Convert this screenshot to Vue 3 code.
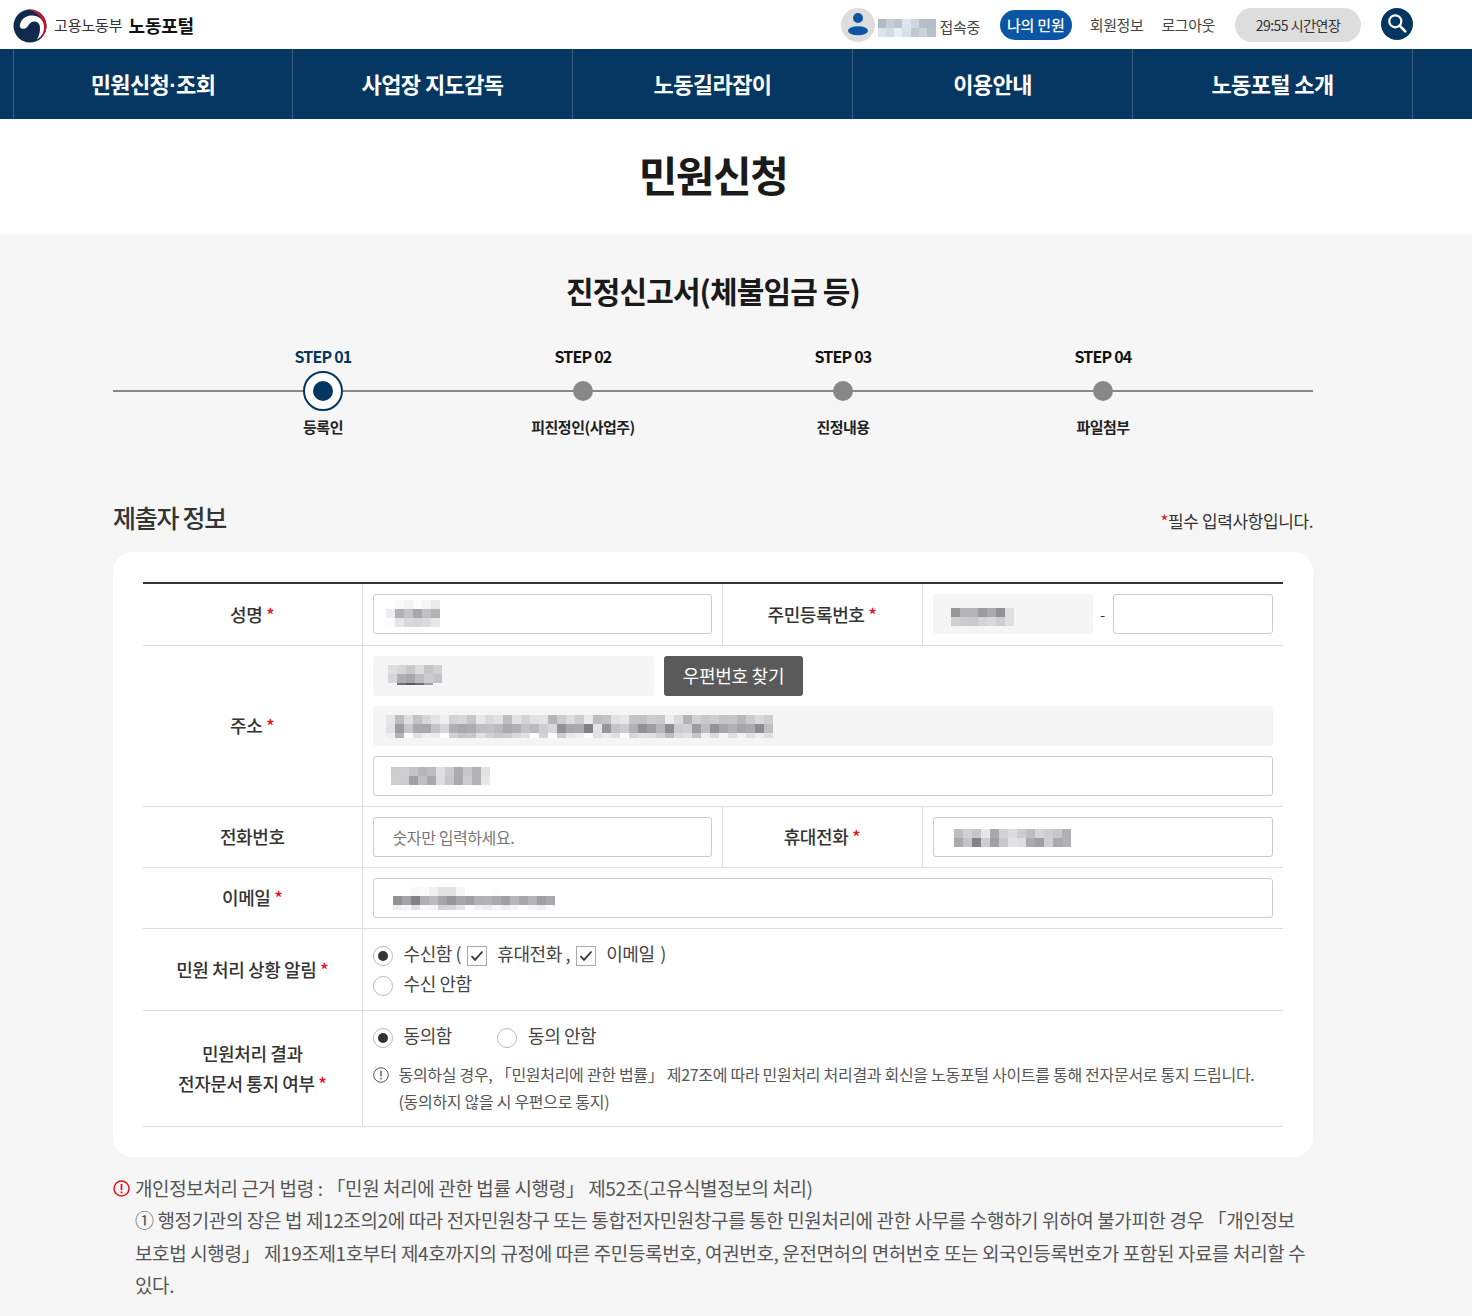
<script setup>
const navItems = [
  { text: '민원신청', rest: '조회' },
  { text: '사업장 지도감독' },
  { text: '노동길라잡이' },
  { text: '이용안내' },
  { text: '노동포털 소개' },
];

const steps = [
  { no: 'STEP 01', label: '등록인', active: true },
  { no: 'STEP 02', label: '피진정인(사업주)' },
  { no: 'STEP 03', label: '진정내용' },
  { no: 'STEP 04', label: '파일첨부' },
];

// blurred personal data, grey levels row by row
const blur = {
  user: [
    [185, 205, 195, 228, 215, 190, 190],
    [226, 218, 238, 225, 200, 210, 192],
  ],
  name: [
    [255, 250, 244, 252, 246, 234],
    [238, 176, 196, 168, 194, 178],
    [252, 230, 216, 214, 220, 232],
  ],
  zip: [
    [222, 214, 200, 220, 198, 208],
    [214, 176, 168, 190, 205, 196],
    [245, 110, 90, 110, 160, 245],
  ],
  addr: [
    [230, 190, 222, 196, 214, 228, 240, 210, 214, 198, 232, 218, 226, 190, 226, 212, 226, 228, 182, 204, 220, 206, 234, 190, 196, 226, 232, 196, 194, 204, 202, 238, 218, 180, 210, 200, 206, 196, 198, 184, 204, 218, 206],
    [226, 158, 200, 170, 168, 196, 214, 176, 168, 172, 190, 194, 186, 170, 178, 196, 186, 206, 216, 146, 168, 170, 128, 228, 150, 196, 206, 178, 146, 158, 184, 142, 204, 208, 158, 190, 148, 166, 178, 166, 170, 140, 190],
    [238, 180, 255, 226, 238, 236, 255, 210, 196, 200, 226, 210, 200, 204, 216, 226, 255, 210, 255, 206, 232, 238, 255, 226, 236, 224, 255, 216, 226, 224, 210, 190, 220, 226, 196, 240, 218, 245, 224, 240, 224, 238, 222],
  ],
  detail: [
    [204, 206, 196, 182, 188, 224, 204, 172, 200, 178, 226],
    [206, 204, 160, 192, 168, 222, 200, 170, 204, 178, 230],
  ],
  rrn: [
    [150, 180, 180, 156, 170, 146, 222],
    [208, 204, 202, 212, 218, 206, 224],
  ],
  phone: [
    [190, 210, 198, 230, 170, 210, 220, 205, 190, 214, 206, 200, 178],
    [170, 196, 130, 206, 160, 200, 226, 222, 170, 160, 208, 170, 178],
  ],
  email: [
    [255, 255, 248, 250, 240, 226, 226, 246, 255, 255, 255, 252, 255, 255, 255, 255, 255, 255],
    [146, 164, 130, 176, 186, 166, 152, 168, 160, 178, 180, 170, 160, 182, 168, 180, 160, 168],
    [238, 246, 226, 250, 246, 210, 214, 228, 255, 242, 236, 246, 238, 246, 255, 244, 240, 250],
  ],
};

const cellColor = (v) => `rgb(${v},${v},${v + 3})`;
const userColor = (v) => `rgb(${v - 8},${v},${v + 10})`;
</script>

<template>
  <div class="page">
    <header class="top">
      <div class="top-in">
        <a class="logo">
          <svg width="34" height="34" viewBox="0 0 34 34">
            <circle cx="17" cy="17" r="16.500" fill="#0f2a4c" />
            <path d="M6.800 17.500C7 11 12 7 18 6.500 24 5.800 31.500 10 31.500 18c0 5-2.500 9.500-7.500 12.500 2.500-4 3.500-9.500 2.800-13.500C26 12.800 21 11.500 18 13.500c-2.500 1.700-3.200 5-6 6-2.500.8-4.700 0-5.200-2z" fill="#fff" />
            <path d="M15 .7C24-.3 33.500 6.500 33.500 17c0 6-3.500 11.500-8 14 4-4 6-9 5.500-14C30 8.500 23.500 2.500 15 .7z" fill="#c8142e" />
          </svg>
          <span class="logo-sub">고용노동부</span>
          <span class="logo-main">노동포털</span>
        </a>
        <div class="util">
          <span class="avatar">
            <svg width="24" height="26" viewBox="0 0 24 26">
              <circle cx="12" cy="6" r="5" fill="#0a56a5" />
              <ellipse cx="12" cy="18.700" rx="10" ry="4.500" fill="#0a56a5" />
            </svg>
          </span>
          <span class="mosaic user-blur">
            <span v-for="(row, i) in blur.user" :key="i" class="mrow">
              <i v-for="(v, j) in row" :key="j" class="cell" :style="{ background: userColor(v) }"></i>
            </span>
          </span>
          <span class="conn">접속중</span>
          <a class="my-pill">나의 민원</a>
          <a class="ulink first">회원정보</a>
          <a class="ulink">로그아웃</a>
          <a class="timer">29:55 시간연장</a>
          <a class="search">
            <svg width="22" height="22" viewBox="0 0 22 22" fill="none" stroke="#fff" stroke-width="2.200" stroke-linecap="round">
              <circle cx="9.300" cy="8.300" r="6" />
              <path d="M14 13l5.300 5.300" stroke-width="2.600" />
            </svg>
          </a>
        </div>
      </div>
    </header>

    <nav class="gnb">
      <ul class="gnb-list">
        <li v-for="item in navItems" :key="item.text">
          {{ item.text }}<span v-if="item.rest" class="mid">·</span>{{ item.rest }}
        </li>
      </ul>
    </nav>

    <div class="title-wrap">
      <h1>민원신청</h1>
    </div>

    <main class="body">
      <div class="content">
        <h2 class="form-title">진정신고서(체불임금 등)</h2>

        <div class="steps">
          <div class="steps-line"></div>
          <div v-for="s in steps" :key="s.no" class="step" :class="{ on: s.active }">
            <span class="step-no">{{ s.no }}</span>
            <span class="dot-box">
              <span class="dot"></span>
            </span>
            <span class="step-label">{{ s.label }}</span>
          </div>
        </div>

        <div class="sec-head">
          <h3>제출자 정보</h3>
          <p><em>*</em>필수 입력사항입니다.</p>
        </div>

        <section class="card">
          <table class="form">
            <colgroup>
              <col style="width: 219px" />
              <col style="width: 360px" />
              <col style="width: 200px" />
              <col />
            </colgroup>
            <tbody>
              <tr class="first-row">
                <th>성명 <em>*</em></th>
                <td>
                  <div class="field">
                    <span class="mosaic m-name">
                      <span v-for="(row, i) in blur.name" :key="i" class="mrow">
                        <i v-for="(v, j) in row" :key="j" class="cell" :style="{ background: cellColor(v) }"></i>
                      </span>
                    </span>
                  </div>
                </td>
                <th>주민등록번호 <em>*</em></th>
                <td>
                  <div class="rrn">
                    <div class="field ro rrn-a">
                      <span class="mosaic m-rrn">
                        <span v-for="(row, i) in blur.rrn" :key="i" class="mrow">
                          <i v-for="(v, j) in row" :key="j" class="cell" :style="{ background: cellColor(v) }"></i>
                        </span>
                      </span>
                    </div>
                    <span class="dash">-</span>
                    <div class="field rrn-b"></div>
                  </div>
                </td>
              </tr>
              <tr>
                <th>주소 <em>*</em></th>
                <td colspan="3">
                  <div class="addr">
                    <div class="zip-row">
                      <div class="field ro zip">
                        <span class="mosaic m-zip">
                          <span v-for="(row, i) in blur.zip" :key="i" class="mrow">
                            <i v-for="(v, j) in row" :key="j" class="cell" :style="{ background: cellColor(v) }"></i>
                          </span>
                        </span>
                      </div>
                      <button class="zip-btn">우편번호 찾기</button>
                    </div>
                    <div class="field ro">
                      <span class="mosaic m-addr">
                        <span v-for="(row, i) in blur.addr" :key="i" class="mrow">
                          <i v-for="(v, j) in row" :key="j" class="cell" :style="{ background: cellColor(v) }"></i>
                        </span>
                      </span>
                    </div>
                    <div class="field">
                      <span class="mosaic m-detail">
                        <span v-for="(row, i) in blur.detail" :key="i" class="mrow">
                          <i v-for="(v, j) in row" :key="j" class="cell" :style="{ background: cellColor(v) }"></i>
                        </span>
                      </span>
                    </div>
                  </div>
                </td>
              </tr>
              <tr>
                <th>전화번호</th>
                <td>
                  <div class="field ph">숫자만 입력하세요.</div>
                </td>
                <th>휴대전화 <em>*</em></th>
                <td>
                  <div class="field">
                    <span class="mosaic m-phone">
                      <span v-for="(row, i) in blur.phone" :key="i" class="mrow">
                        <i v-for="(v, j) in row" :key="j" class="cell" :style="{ background: cellColor(v) }"></i>
                      </span>
                    </span>
                  </div>
                </td>
              </tr>
              <tr>
                <th>이메일 <em>*</em></th>
                <td colspan="3">
                  <div class="field">
                    <span class="mosaic m-email">
                      <span v-for="(row, i) in blur.email" :key="i" class="mrow">
                        <i v-for="(v, j) in row" :key="j" class="cell" :style="{ background: cellColor(v) }"></i>
                      </span>
                    </span>
                  </div>
                </td>
              </tr>
              <tr>
                <th>민원 처리 상황 알림 <em>*</em></th>
                <td colspan="3" class="opts">
                  <div class="opt-line">
                    <span class="radio checked"></span>
                    <span class="opt-txt">수신함 (</span>
                    <span class="check">
                      <svg width="14" height="12" viewBox="0 0 14 12" fill="none" stroke="#333" stroke-width="1.800"><path d="M1.500 6l3.500 3.800L12.500 1.500" /></svg>
                    </span>
                    <span class="opt-txt gap-l">휴대전화 ,</span>
                    <span class="check">
                      <svg width="14" height="12" viewBox="0 0 14 12" fill="none" stroke="#333" stroke-width="1.800"><path d="M1.500 6l3.500 3.800L12.500 1.500" /></svg>
                    </span>
                    <span class="opt-txt gap-l">이메일 <span class="paren">)</span></span>
                  </div>
                  <div class="opt-line">
                    <span class="radio"></span>
                    <span class="opt-txt">수신 안함</span>
                  </div>
                </td>
              </tr>
              <tr class="last">
                <th>민원처리 결과<br />전자문서 통지 여부 <em>*</em></th>
                <td colspan="3" class="opts agree">
                  <div class="opt-line">
                    <span class="radio checked"></span>
                    <span class="opt-txt">동의함</span>
                    <span class="radio second"></span>
                    <span class="opt-txt">동의 안함</span>
                  </div>
                  <div class="info">
                    <span class="info-ico">
                      <svg width="16" height="16" viewBox="0 0 16 16" fill="none" stroke="#555">
                        <circle cx="8" cy="8" r="7.300" />
                        <path d="M8 3.800v5.400M8 10.800v1.600" stroke-width="1.400" />
                      </svg>
                    </span>
                    <p>동의하실 경우, 「민원처리에 관한 법률」 제27조에 따라 민원처리 처리결과 회신을 노동포털 사이트를 통해 전자문서로 통지 드립니다.<br />(동의하지 않을 시 우편으로 통지)</p>
                  </div>
                </td>
              </tr>
            </tbody>
          </table>
        </section>

        <div class="notice">
          <span class="notice-ico">
            <svg width="17" height="17" viewBox="0 0 17 17" fill="none" stroke="#e8141c">
              <circle cx="8.500" cy="8.500" r="7.500" stroke-width="1.500" />
              <path d="M8.500 4v6M8.500 11.500v1.800" stroke-width="1.800" />
            </svg>
          </span>
          <p>개인정보처리 근거 법령 : 「민원 처리에 관한 법률 시행령」 제52조(고유식별정보의 처리)<br />① 행정기관의 장은 법 제12조의2에 따라 전자민원창구 또는 통합전자민원창구를 통한 민원처리에 관한 사무를 수행하기 위하여 불가피한 경우 「개인정보 보호법 시행령」 제19조제1호부터 제4호까지의 규정에 따른 주민등록번호, 여권번호, 운전면허의 면허번호 또는 외국인등록번호가 포함된 자료를 처리할 수 있다.</p>
        </div>
      </div>
    </main>
  </div>
</template>

<style>
html,
body {
  margin: 0;
  background: #f6f6f6;
}
</style>

<style scoped>
.page {
  font-family: 'Noto Sans CJK KR', 'Noto Sans', sans-serif;
  color: #222;
  height: 1316px;
  overflow: hidden;
}
.top {
  background: #fff;
  height: 49px;
}
.top-in {
  width: 1400px;
  margin-left: 13px;
  height: 49px;
  display: flex;
  justify-content: space-between;
}
.logo {
  display: flex;
  align-items: center;
  height: 49px;
  margin-top: 1px;
}
.logo svg {
  display: block;
  margin-right: 7px;
}
.logo-sub {
  font-size: 15px;
  color: #333;
  letter-spacing: -0.1px;
  margin-bottom: 2px;
}
.logo-main {
  font-size: 18px;
  font-weight: 700;
  color: #111;
  margin: 0 0 2px 6px;
  letter-spacing: -0.2px;
}
.util {
  display: flex;
  align-items: flex-start;
}
.avatar {
  width: 34px;
  height: 34px;
  margin-top: 8px;
  border-radius: 50%;
  background: #ddd;
  display: flex;
  align-items: center;
  justify-content: center;
}
.mosaic {
  display: inline-flex;
  flex-direction: column;
  flex-shrink: 0;
}
.mrow {
  display: flex;
}
.cell {
  display: block;
  width: 9px;
  height: 9px;
}
.user-blur {
  margin: 19px 0 0 3px;
  width: 58px;
  overflow: hidden;
}
.user-blur .cell {
  width: 8.300px;
}
.conn {
  font-size: 15px;
  color: #444;
  margin: 16px 0 0 4px;
  line-height: 22px;
  letter-spacing: -0.4px;
}
.my-pill {
  margin: 10px 0 0 20px;
  width: 72px;
  height: 30px;
  border-radius: 15px;
  background: #0a56a5;
  color: #fff;
  font-size: 15px;
  font-weight: 500;
  line-height: 29px;
  text-align: center;
  letter-spacing: -0.2px;
}
.ulink {
  font-size: 15px;
  color: #444;
  margin: 14px 0 0 18px;
  line-height: 22px;
  letter-spacing: -0.4px;
}
.timer {
  margin: 8px 0 0 20px;
  width: 126px;
  height: 34px;
  border-radius: 17px;
  background: #ddd;
  color: #333;
  font-size: 14px;
  line-height: 34px;
  text-align: center;
  letter-spacing: -0.5px;
}
.search {
  margin: 8px 0 0 20px;
  width: 32px;
  height: 32px;
  border-radius: 50%;
  background: #04375f;
  display: flex;
  align-items: center;
  justify-content: center;
}
.gnb {
  background: #063762;
  height: 70px;
}
.gnb-list {
  list-style: none;
  margin: 0 0 0 13px;
  padding: 0;
  width: 1400px;
  height: 70px;
  display: flex;
  border-left: 1px solid #3c5f80;
  box-sizing: content-box;
}
.gnb-list li {
  width: 280px;
  border-right: 1px solid #3c5f80;
  box-sizing: border-box;
  text-align: center;
  color: #fff;
  font-size: 22px;
  font-weight: 700;
  line-height: 68px;
  letter-spacing: -0.6px;
}
.gnb-list li:first-child {
  width: 279px;
}
.mid {
  font-family: 'Liberation Sans', sans-serif;
}
.title-wrap {
  background: #fff;
  height: 115px;
  width: 100%;
}
.title-wrap h1 {
  margin: 0 0 0 13px;
  width: 1400px;
  text-align: center;
  font-size: 42px;
  font-weight: 700;
  line-height: 110px;
  letter-spacing: -1.500px;
  color: #1a1a1a;
}
.body {
  background: #f6f6f6;
}
.content {
  width: 1200px;
  margin-left: 113px;
}
.form-title {
  margin: 0;
  padding-top: 33px;
  text-align: center;
  font-size: 30px;
  font-weight: 700;
  line-height: 46px;
  letter-spacing: -0.9px;
  color: #1a1a1a;
}
.steps {
  position: relative;
  display: flex;
  padding-left: 80px;
  margin-top: 31px;
}
.steps-line {
  position: absolute;
  left: 0;
  right: 0;
  top: 46px;
  height: 2px;
  background: #888;
}
.step {
  position: relative;
  width: 260px;
  display: flex;
  flex-direction: column;
  align-items: center;
}
.step-no {
  font-size: 16px;
  font-weight: 700;
  line-height: 24px;
  letter-spacing: -0.8px;
  color: #111;
}
.dot-box {
  width: 40px;
  height: 40px;
  margin-top: 3px;
  display: flex;
  align-items: center;
  justify-content: center;
  box-sizing: border-box;
  border-radius: 50%;
}
.dot {
  width: 20px;
  height: 20px;
  border-radius: 50%;
  background: #888;
}
.step.on .dot-box {
  background: #fff;
  border: 2px solid #04375f;
}
.step.on .dot {
  background: #04375f;
}
.step.on .step-no {
  color: #04375f;
}
.step-label {
  margin-top: 5px;
  font-size: 15px;
  font-weight: 700;
  line-height: 22px;
  letter-spacing: -0.5px;
  color: #222;
}
.sec-head {
  display: flex;
  justify-content: space-between;
  align-items: flex-end;
  margin-top: 61px;
}
.sec-head h3 {
  margin: 0 0 -1px;
  font-size: 25px;
  font-weight: 500;
  line-height: 36px;
  letter-spacing: -1.300px;
  color: #333;
}
.sec-head p {
  margin: 0;
  font-size: 17px;
  line-height: 26px;
  letter-spacing: -0.4px;
  color: #333;
}
em {
  font-style: normal;
  color: #e8141c;
}
.card {
  margin-top: 18px;
  padding: 30px;
  background: #fff;
  border-radius: 20px;
}
.form {
  width: 1140px;
  border-collapse: collapse;
  table-layout: fixed;
  border-top: 2px solid #333;
}
.form th,
.form td {
  border-bottom: 1px solid #ddd;
  padding: 10px;
  box-sizing: border-box;
}
.form .first-row td {
  padding-bottom: 11px;
}
.form th {
  font-size: 18px;
  font-weight: 500;
  line-height: 30px;
  letter-spacing: -0.4px;
  color: #333;
  text-align: center;
  border-right: 1px solid #ddd;
  padding-top: 8px;
  padding-bottom: 10px;
}
.form td + th {
  border-left: 1px solid #ddd;
}
.field {
  height: 40px;
  box-sizing: border-box;
  border: 1px solid #ccc;
  border-radius: 3px;
  background: #fff;
  display: flex;
  align-items: center;
  padding-left: 12px;
  overflow: hidden;
}
.field.ro {
  background: #f5f5f5;
  border-color: #f5f5f5;
}
.field.ph {
  font-size: 16px;
  color: #777;
  padding-left: 19px;
  letter-spacing: -0.4px;
}
.m-name {
  margin-bottom: 1px;
}
.m-rrn {
  margin: 6px 0 0 5px;
}
.m-zip {
  margin: 0 0 2px 2px;
}
.m-zip .mrow:last-child .cell {
  height: 2px;
}
.m-addr {
  margin-top: 1px;
}
.m-addr .mrow:last-child .cell,
.m-email .mrow:last-child .cell {
  height: 5px;
}
.m-detail {
  margin-left: 5px;
}
.m-phone {
  margin: 2px 0 0 8px;
}
.m-email {
  margin-left: 7px;
}
.rrn {
  display: flex;
  align-items: center;
}
.rrn-a {
  width: 160px;
}
.dash {
  width: 20px;
  text-align: center;
  font-size: 15px;
  color: #333;
}
.rrn-b {
  width: 160px;
}
.addr {
  display: flex;
  flex-direction: column;
  gap: 10px;
}
.zip-row {
  display: flex;
  gap: 10px;
}
.zip {
  width: 281px;
}
.zip-btn {
  width: 139px;
  height: 40px;
  border: 0;
  border-radius: 3px;
  background: #5a5a5a;
  color: #fff;
  font-family: inherit;
  font-size: 18px;
  letter-spacing: -0.3px;
  padding: 0 0 2px 1px;
}
.opts {
  font-size: 18px;
  letter-spacing: -0.4px;
  color: #444;
}
.form td.opts {
  padding-top: 10px;
  padding-bottom: 11px;
}
.opt-line {
  display: flex;
  align-items: center;
  height: 30px;
}
.opt-txt {
  margin-bottom: 2px;
}
.radio {
  width: 20px;
  height: 20px;
  box-sizing: border-box;
  margin-top: 4px;
  border: 1px solid #bbb;
  border-radius: 50%;
  background: #fff;
  display: flex;
  align-items: center;
  justify-content: center;
  margin-right: 11px;
  flex-shrink: 0;
}
.radio.checked::after {
  content: '';
  width: 10px;
  height: 10px;
  border-radius: 50%;
  background: #333;
}
.radio.second {
  margin-left: 45px;
}
.check {
  width: 20px;
  height: 20px;
  box-sizing: border-box;
  margin-top: 4px;
  border: 1px solid #aaa;
  margin-left: 6px;
  display: flex;
  align-items: center;
  justify-content: center;
  flex-shrink: 0;
}
.gap-l {
  margin-left: 10px;
}
.paren {
  margin-left: 2px;
}
.info {
  display: flex;
  margin-top: 10px;
}
.info-ico {
  width: 26px;
  flex-shrink: 0;
  padding-top: 6px;
}
.info-ico svg {
  display: block;
}
.info p {
  margin: 0;
  font-size: 16px;
  line-height: 27px;
  letter-spacing: -0.3px;
  color: #555;
}
.notice {
  display: flex;
  margin-top: 15px;
}
.notice-ico {
  width: 22px;
  flex-shrink: 0;
  padding-top: 8px;
}
.notice-ico svg {
  display: block;
}
.notice p {
  margin: 0;
  font-size: 19px;
  line-height: 32.400px;
  letter-spacing: -0.38px;
  color: #555;
}
</style>
